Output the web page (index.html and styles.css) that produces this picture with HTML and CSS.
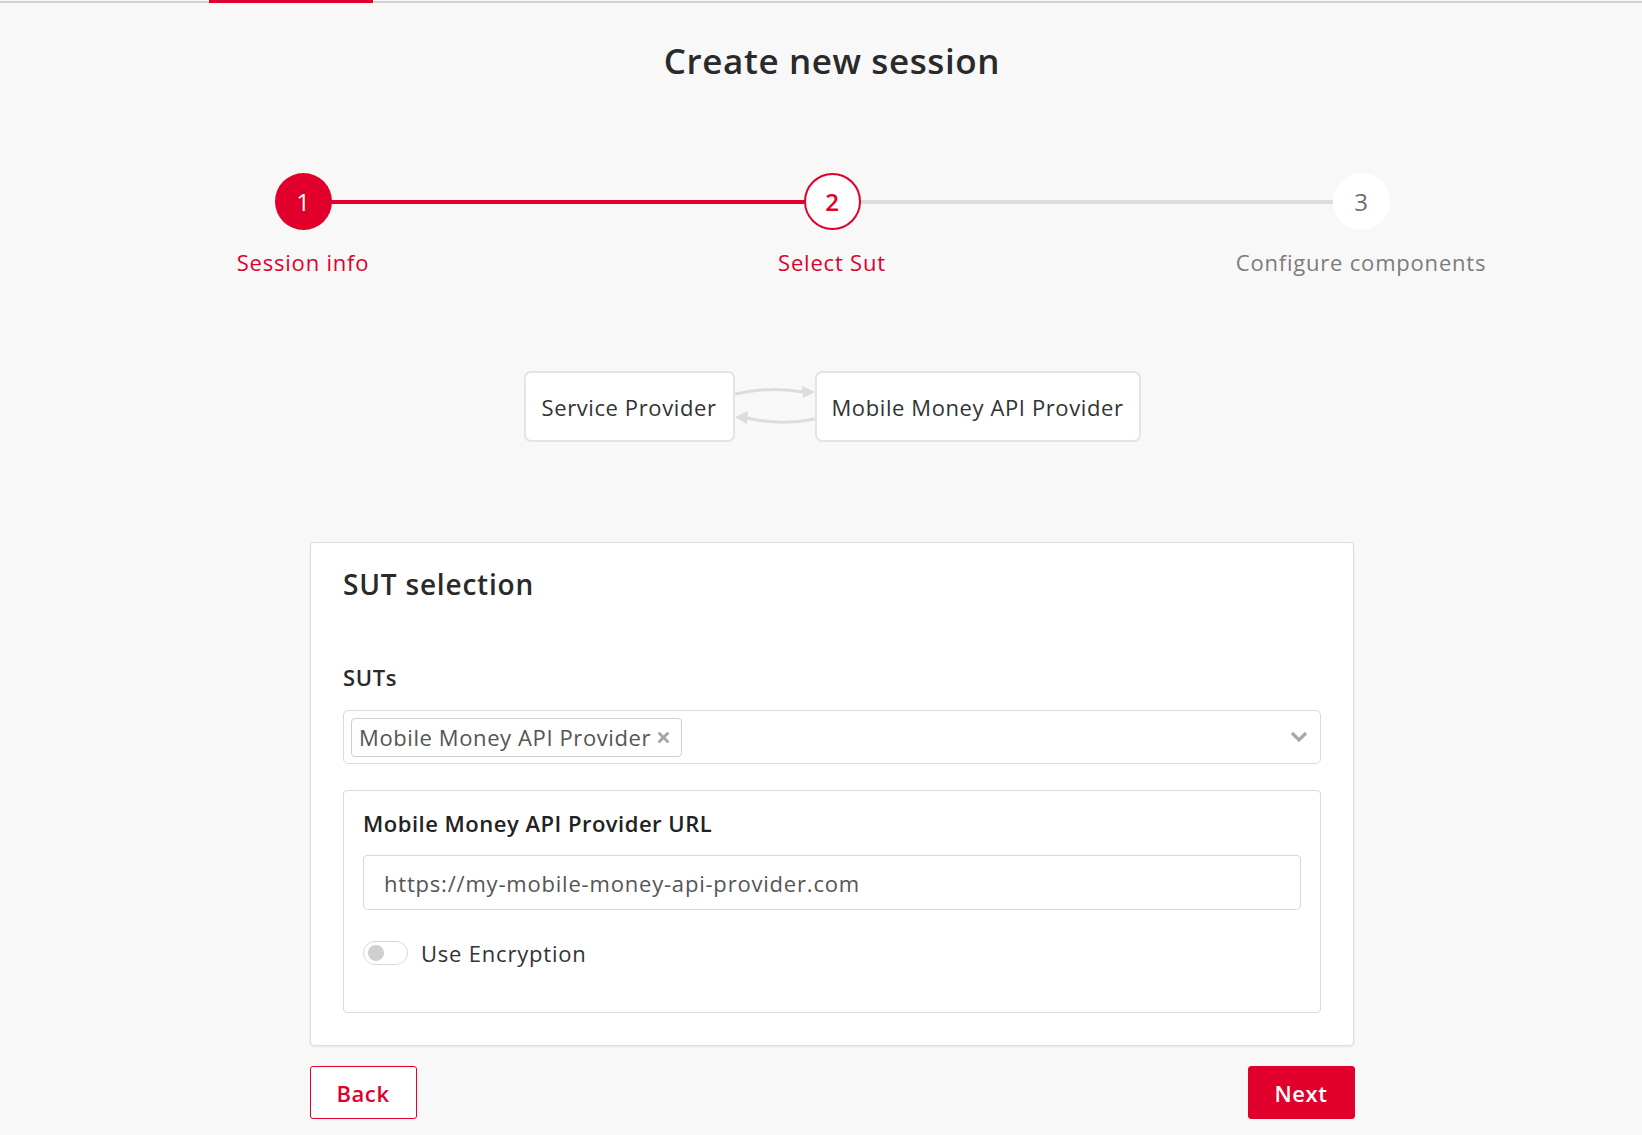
FILE: index.html
```html
<!DOCTYPE html>
<html lang="en">
<head>
<meta charset="utf-8">
<title>Create new session</title>
<link rel="stylesheet" href="styles.css">
</head>
<body>
<div class="topbar"><div class="topbar-active"></div></div>
<main class="page">
  <h1 class="title">Create new session</h1>

  <ol class="stepper">
    <li class="step step-done">
      <span class="step-circle">1</span>
      <span class="step-label">Session info</span>
    </li>
    <li class="step step-current">
      <span class="step-circle">2</span>
      <span class="step-label">Select Sut</span>
    </li>
    <li class="step step-todo">
      <span class="step-circle">3</span>
      <span class="step-label">Configure components</span>
    </li>
  </ol>

  <div class="diagram">
    <div class="node node-sp">Service Provider</div>
    <svg class="links" width="80" height="70" viewBox="0 0 80 70">
      <path d="M0 23 Q36 15 69 21" fill="none" stroke="#dcdcdc" stroke-width="3"/>
      <polygon points="80,21 67,15 68,27" fill="#dcdcdc"/>
      <path d="M80 48 Q46 55 12 47" fill="none" stroke="#dcdcdc" stroke-width="3"/>
      <polygon points="0,46 13,40 12,53" fill="#dcdcdc"/>
    </svg>
    <div class="node node-mm">Mobile Money API Provider</div>
  </div>

  <section class="card">
    <h2 class="card-title">SUT selection</h2>
    <label class="field-label">SUTs</label>
    <div class="select">
      <span class="tag">Mobile Money API Provider<svg class="tag-x" width="13" height="13" viewBox="0 0 13 13"><path d="M2.5 2.5 L10.5 10.5 M10.5 2.5 L2.5 10.5" stroke="#a6a6a6" stroke-width="3" stroke-linecap="round"/></svg></span>
      <svg class="chevron" width="18" height="12" viewBox="0 0 18 12"><path d="M2 2 L9 9 L16 2" fill="none" stroke="#a8a8a8" stroke-width="3.2"/></svg>
    </div>

    <div class="subbox">
      <div class="sub-label">Mobile Money API Provider URL</div>
      <div class="input">https://my-mobile-money-api-provider.com</div>
      <div class="toggle-row">
        <span class="toggle"><span class="knob"></span></span>
        <span class="toggle-text">Use Encryption</span>
      </div>
    </div>
  </section>

  <div class="actions">
    <button class="btn btn-back">Back</button>
    <button class="btn btn-next">Next</button>
  </div>
</main>
</body>
</html>
```
FILE: styles.css
```css
* { box-sizing: border-box; }
html, body { margin: 0; padding: 0; }
body {
  background: #f8f8f8;
  font-family: "Open Sans", "Noto Sans", sans-serif;
  color: #2b2b2b;
  letter-spacing: 0.6px;
  width: 1642px;
  height: 1135px;
  overflow: hidden;
}
.topbar {
  height: 3px;
  background: linear-gradient(to bottom, transparent 1px, #d2d2d2 1px);
  display: flex;
}
.topbar-active {
  margin-left: 209px;
  width: 164px;
  height: 3px;
  background: #e0002b;
}
.page {
  padding-left: 22px;
  display: flex;
  flex-direction: column;
  align-items: center;
}
.title {
  margin: 38px 0 0;
  font-size: 35px;
  line-height: 40px;
  font-weight: 600;
  color: #2a2a2a;
  letter-spacing: 0.6px;
}
.stepper {
  list-style: none;
  margin: 92px 0 0;
  padding: 0;
  display: grid;
  grid-template-columns: repeat(3, 529px);
}
.step {
  position: relative;
  display: flex;
  flex-direction: column;
  align-items: center;
}
.step:not(:first-child)::before {
  content: "";
  position: absolute;
  top: 27px;
  height: 4px;
  left: calc(-50% + 28px);
  right: calc(50% + 28px);
  background: #dedede;
}
.step-current::before { background: #e0002b !important; }
.step-circle {
  position: relative;
  z-index: 1;
  width: 57px;
  height: 57px;
  border-radius: 50%;
  display: flex;
  align-items: center;
  justify-content: center;
  font-size: 24px;
  font-weight: 500;
  letter-spacing: 0;
}
.step-done .step-circle { background: #e0002b; color: #fff; }
.step-current .step-circle { background: #fff; color: #e0002b; border: 2px solid #e0002b; font-weight: 600; }
.step-todo .step-circle { background: #fff; color: #6e6e6e; }
.step-label {
  margin-top: 18px;
  font-size: 22px;
  line-height: 28px;
  font-weight: 500;
  letter-spacing: 0.8px;
}
.step-done .step-label, .step-current .step-label { color: #e0002b; }
.step-todo .step-label { color: #7c7c7c; }

.diagram {
  margin-top: 95px;
  display: flex;
  align-items: flex-start;
}
.node {
  height: 71px;
  background: #fff;
  border: 2px solid #e4e4e4;
  border-radius: 7px;
  display: flex;
  align-items: center;
  justify-content: center;
  font-size: 22px;
  color: #333;
}
.node-sp { width: 211px; }
.node-mm { width: 326px; }
.links { display: block; }

.card {
  margin-top: 100px;
  width: 1044px;
  background: #fff;
  border: 1px solid #dcdcdc;
  border-radius: 4px;
  box-shadow: 0 1px 2px rgba(0,0,0,0.08);
  padding: 23px 32px 32px;
}
.card-title {
  margin: 0;
  font-size: 28px;
  line-height: 36px;
  font-weight: 600;
  color: #2a2a2a;
  letter-spacing: 0.8px;
}
.field-label {
  display: block;
  margin-top: 61px;
  font-size: 22px;
  line-height: 28px;
  font-weight: 600;
  color: #2a2a2a;
}
.select {
  margin-top: 19px;
  height: 54px;
  border: 1px solid #dadada;
  border-radius: 5px;
  display: flex;
  align-items: center;
  padding: 0 12px 0 7px;
}
.tag {
  height: 39px;
  width: 331px;
  border: 1px solid #cfcfcf;
  border-radius: 4px;
  display: flex;
  align-items: center;
  padding-left: 7px;
  font-size: 22px;
  color: #555;
  white-space: nowrap;
}
.tag-x {
  margin-left: 6px;
  flex: none;
}
.chevron { margin-left: auto; }

.subbox {
  margin-top: 26px;
  border: 1px solid #dadada;
  border-radius: 4px;
  padding: 18px 19px 44px;
}
.sub-label {
  font-size: 22px;
  line-height: 28px;
  font-weight: 600;
  color: #222;
  letter-spacing: 0.5px;
}
.input {
  margin-top: 18px;
  height: 55px;
  border: 1px solid #d8d8d8;
  border-radius: 4px;
  padding-left: 20px;
  display: flex;
  align-items: center;
  font-size: 22px;
  color: #555;
  letter-spacing: 0.8px;
}
.toggle-row {
  margin-top: 28px;
  display: flex;
  align-items: center;
}
.toggle {
  width: 45px;
  height: 24px;
  border: 1px solid #d8d8d8;
  border-radius: 12px;
  background: #fff;
  display: flex;
  align-items: center;
  padding-left: 4px;
}
.knob {
  width: 16px;
  height: 16px;
  border-radius: 50%;
  background: #cfcfcf;
}
.toggle-text {
  margin-left: 13px;
  font-size: 22px;
  color: #333;
  letter-spacing: 0.8px;
}

.actions {
  margin-top: 20px;
  width: 1045px;
  display: flex;
  justify-content: space-between;
}
.btn {
  width: 107px;
  height: 53px;
  border: 1px solid #e0002b;
  border-radius: 3px;
  font-family: inherit;
  font-size: 22px;
  font-weight: 600;
  letter-spacing: 0.6px;
  cursor: pointer;
}
.btn-back { background: #fff; color: #e0002b; }
.btn-next { background: #e0002b; color: #fff; }
```
